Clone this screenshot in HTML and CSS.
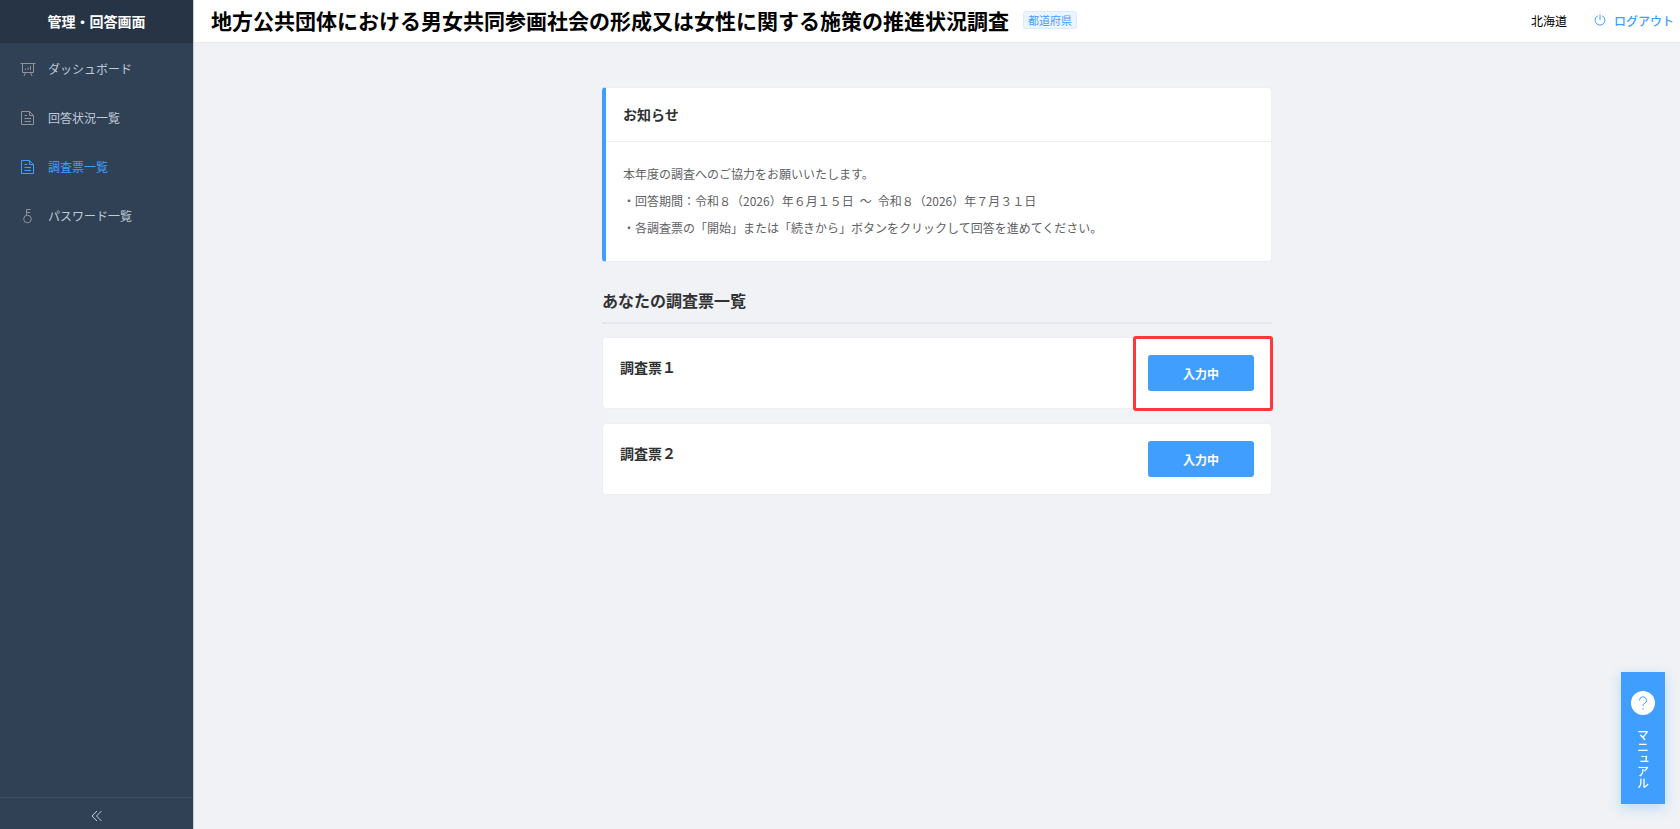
FILE: index.html
```html
<!DOCTYPE html>
<html lang="ja">
<head>
  <meta charset="UTF-8" />
  <meta name="viewport" content="width=device-width, initial-scale=1.0" />
  <title>調査票一覧</title>
  <link rel="stylesheet" href="styles.css">
</head>
<body>

  <div class="container">
    <aside class="sidebar">
      <h2 class="sidebar-title">管理・回答画面</h2>
      <nav class="menu">
        <a class="menu-item" href="#dashboard">
          <svg class="icon" viewBox="0 0 16 16"><path d="M0.5 2.5h15M2.5 2.5v9h11v-9M5.500 11.500l-1.500 3.500M10.500 11.500l1.500 3.500M5.500 9V7.500M8 9V6.500M10.500 9V5"/></svg>
          <span>ダッシュボード</span>
        </a>
        <a class="menu-item" href="#status">
          <svg class="icon" viewBox="0 0 16 16"><path d="M1.500 1.500h8l4 4v9h-12zM9.500 1.500v4h4M4.500 5.500h2.500M4.500 8.500h6.500M4.500 11.500h6.500"/></svg>
          <span>回答状況一覧</span>
        </a>
        <a class="menu-item active" href="#surveys">
          <svg class="icon" viewBox="0 0 16 16"><path d="M1.500 1.500h8l4 4v9h-12zM9.500 1.500v4h4M4.500 5.500h2.500M4.500 8.500h6.500M4.500 11.500h6.500"/></svg>
          <span>調査票一覧</span>
        </a>
        <a class="menu-item" href="#passwords">
          <svg class="icon" viewBox="0 0 16 16"><circle cx="7.500" cy="11" r="3.800"/><path d="M6.500 7.500v-6h4M6.500 4.500h3.500"/></svg>
          <span>パスワード一覧</span>
        </a>
      </nav>
      <button class="collapse-btn" aria-label="メニューを閉じる">
        <svg class="icon" viewBox="0 0 16 16"><path d="M8 3L3 8l5 5M12.500 3l-5 5l5 5"/></svg>
      </button>
    </aside>

    <div class="main-content">
      <header>
        <h1>地方公共団体における男女共同参画社会の形成又は女性に関する施策の推進状況調査</h1>
        <span class="badge">都道府県</span>
        <div class="user">
          <span>北海道</span>
          <a class="logout" href="#logout">
            <svg class="icon" viewBox="0 0 12 12"><path d="M6 0.500v5.500M3.800 1.800a4.900 4.900 0 1 0 4.400 0"/></svg>
            <span>ログアウト</span>
          </a>
        </div>
      </header>

      <main>
        <section class="notice">
          <h2>お知らせ</h2>
          <div class="notice-body">
            <p>本年度の調査へのご協力をお願いいたします。</p>
            <p>・回答期間：令和８（2026）年６月１５日&ensp;～&ensp;令和８（2026）年７月３１日</p>
            <p>・各調査票の「開始」または「続きから」ボタンをクリックして回答を進めてください。</p>
          </div>
        </section>

        <h2 class="list-title">あなたの調査票一覧</h2>

        <div class="survey highlight">
          <h3>調査票１</h3>
          <button class="survey-btn">入力中</button>
        </div>
        <div class="survey">
          <h3>調査票２</h3>
          <button class="survey-btn">入力中</button>
        </div>
      </main>
    </div>
  </div>

  <button class="manual-btn">
    <svg class="manual-icon" viewBox="0 0 24 24"><circle cx="12" cy="12" r="12"/><path d="M8.500 9.500a3.500 3.500 0 1 1 5 3c-1.200.6-1.500 1.200-1.500 2.500M12 17v1.500"/></svg>
    <span>マニュアル</span>
  </button>

</body>
</html>
```

FILE: styles.css
```css
*,
*::after {
  box-sizing: border-box;
}

html, body {
  height: 100%;
  margin: 0;
  font-family: "Noto Sans CJK JP", sans-serif;
  font-size: 12px;
  background: #f0f2f5;
  color: #303133;
}

h1, h2, h3, p {
  margin: 0;
}

a {
  color: inherit;
  text-decoration: none;
}

button {
  font-family: inherit;
  font-size: 12px;
  border: none;
  cursor: pointer;
}

.icon {
  width: 16px;
  height: 16px;
  fill: none;
  stroke: currentColor;
  stroke-width: 1;
}

.container {
  display: flex;
  min-height: 100%;
}

.sidebar {
  display: flex;
  flex-direction: column;
  flex: 0 0 194px;
  background: #304156;
  border-right: 1px solid #c6ccd5;
}

.sidebar-title {
  height: 43px;
  line-height: 42px;
  background: #263445;
  color: #fff;
  font-size: 14px;
  text-align: center;
}

.menu {
  flex: 1;
  padding-top: 1px;
}

.menu-item {
  display: flex;
  align-items: center;
  gap: 12px;
  height: 49px;
  padding-left: 20px;
  color: #bfcbd9;
}

.menu-item .icon {
  color: #909399;
}

.menu-item.active,
.menu-item.active .icon {
  color: #409eff;
}

.collapse-btn {
  display: flex;
  align-items: center;
  justify-content: center;
  height: 32px;
  padding-top: 6px;
  background: none;
  border-top: 1px solid #3f4f5c;
  color: #bfcbd9;
}

.main-content {
  flex: 1;
  min-width: 0;
}

header {
  display: flex;
  align-items: center;
  height: 43px;
  padding: 0 6px 2px 17px;
  background: #fff;
  border-bottom: 1px solid #e9ebef;
  color: #000;
}

header h1 {
  font-size: 21px;
  line-height: 32px;
}

.badge {
  margin-left: 14px;
  padding: 0 4px;
  font-size: 11px;
  line-height: 16px;
  color: #409eff;
  background: #ecf5ff;
  border: 1px solid #d9ecff;
  border-radius: 3px;
}

.user {
  display: flex;
  gap: 27px;
  margin-left: auto;
}

.logout {
  display: flex;
  align-items: center;
  gap: 8px;
  color: #409eff;
  font-weight: 500;
}

.logout .icon {
  width: 12px;
  height: 12px;
}

main {
  max-width: 670px;
  margin: 0 auto;
  padding: 44px 0;
}

.notice {
  background: #fff;
  border: 1px solid #ebeef5;
  border-left: 4px solid #409eff;
  border-radius: 4px;
}

.notice h2 {
  padding: 16px 17px 17px;
  font-size: 14px;
  line-height: 20px;
  border-bottom: 1px solid #ebeef5;
}

.notice-body {
  padding: 18px 17px 20px;
  color: #606266;
  line-height: 27px;
}

.list-title {
  margin: 24px 0 13px;
  padding-bottom: 8px;
  font-size: 16px;
  line-height: 28px;
  border-bottom: 2px solid #e4e7ed;
}

.survey {
  display: flex;
  align-items: flex-start;
  justify-content: space-between;
  position: relative;
  margin-bottom: 14px;
  padding: 17px;
  background: #fff;
  border: 1px solid #ebeef5;
  border-radius: 4px;
}

.survey h3 {
  font-size: 14px;
  line-height: 24px;
}

.survey-btn {
  width: 106px;
  height: 36px;
  background: #409eff;
  color: #fff;
  font-weight: 700;
  border-radius: 3px;
}

/* red frame round the button of the current survey */
.highlight::after {
  content: "";
  position: absolute;
  top: -2px;
  right: -2px;
  bottom: -3px;
  width: 140px;
  border: 3px solid #ff3838;
  border-radius: 3px;
  pointer-events: none;
}

.manual-btn {
  position: fixed;
  right: 15px;
  bottom: 25px;
  display: flex;
  flex-direction: column;
  align-items: center;
  gap: 14px;
  width: 44px;
  height: 132px;
  padding: 19px 0;
  background: #409eff;
  color: #fff;
  font-weight: 500;
  box-shadow: 0 4px 12px rgba(64, 158, 255, 0.3);
}

.manual-btn span {
  writing-mode: vertical-rl;
  white-space: nowrap;
}

.manual-icon {
  flex-shrink: 0;
  width: 24px;
  height: 24px;
  fill: #fff;
}

.manual-icon path {
  fill: none;
  stroke: #409eff;
}
```
